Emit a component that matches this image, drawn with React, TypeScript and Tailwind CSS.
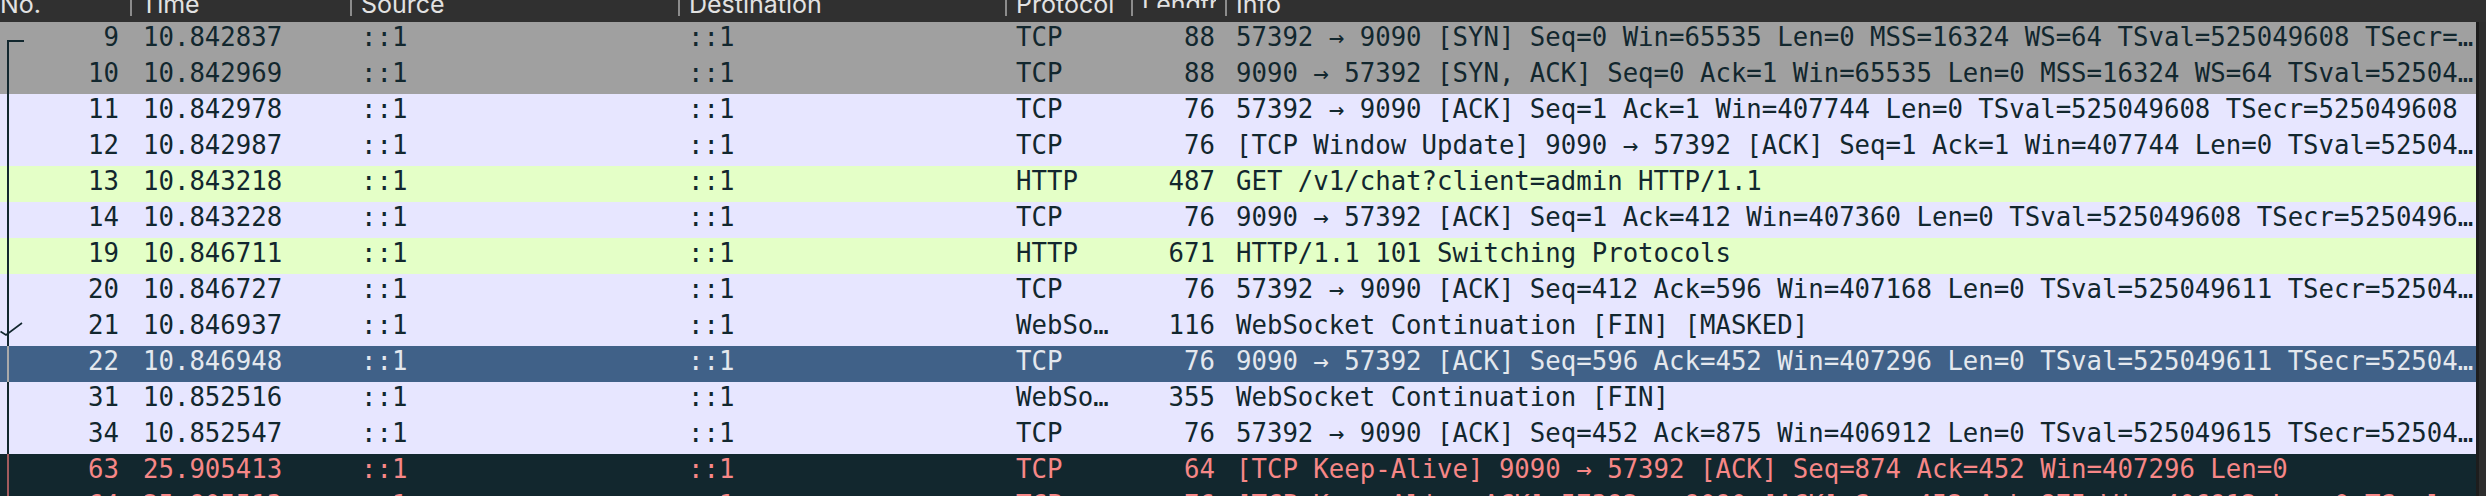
import React from 'react'

type Kind = 'syn' | 'tcp' | 'http' | 'sel' | 'bad'
type Mark = 'start' | 'line' | 'check'

const kinds: Record<Kind, { row: string; stroke: string }> = {
  syn: { row: 'bg-[#a0a0a0] text-[#12272e]', stroke: '#12272e' },
  tcp: { row: 'bg-[#e7e6ff] text-[#12272e]', stroke: '#12272e' },
  http: { row: 'bg-[#e4ffc7] text-[#12272e]', stroke: '#12272e' },
  sel: { row: 'bg-[#406188] text-[#e4e8ee]', stroke: '#a9a9a9' },
  bad: { row: 'bg-[#12272e] text-[#f78787]', stroke: '#a35b5e' },
}

const packets: { no: number; time: string; proto: string; len: number; info: string; kind: Kind; mark: Mark }[] = [
  { no: 9, time: '10.842837', proto: 'TCP', len: 88, kind: 'syn', mark: 'start', info: '57392 → 9090 [SYN] Seq=0 Win=65535 Len=0 MSS=16324 WS=64 TSval=525049608 TSecr=0 SACK_PERM' },
  { no: 10, time: '10.842969', proto: 'TCP', len: 88, kind: 'syn', mark: 'line', info: '9090 → 57392 [SYN, ACK] Seq=0 Ack=1 Win=65535 Len=0 MSS=16324 WS=64 TSval=525049608 TSecr=525049608 SACK_PERM' },
  { no: 11, time: '10.842978', proto: 'TCP', len: 76, kind: 'tcp', mark: 'line', info: '57392 → 9090 [ACK] Seq=1 Ack=1 Win=407744 Len=0 TSval=525049608 TSecr=525049608' },
  { no: 12, time: '10.842987', proto: 'TCP', len: 76, kind: 'tcp', mark: 'line', info: '[TCP Window Update] 9090 → 57392 [ACK] Seq=1 Ack=1 Win=407744 Len=0 TSval=525049608 TSecr=525049608' },
  { no: 13, time: '10.843218', proto: 'HTTP', len: 487, kind: 'http', mark: 'line', info: 'GET /v1/chat?client=admin HTTP/1.1' },
  { no: 14, time: '10.843228', proto: 'TCP', len: 76, kind: 'tcp', mark: 'line', info: '9090 → 57392 [ACK] Seq=1 Ack=412 Win=407360 Len=0 TSval=525049608 TSecr=525049608' },
  { no: 19, time: '10.846711', proto: 'HTTP', len: 671, kind: 'http', mark: 'line', info: 'HTTP/1.1 101 Switching Protocols' },
  { no: 20, time: '10.846727', proto: 'TCP', len: 76, kind: 'tcp', mark: 'line', info: '57392 → 9090 [ACK] Seq=412 Ack=596 Win=407168 Len=0 TSval=525049611 TSecr=525049611' },
  { no: 21, time: '10.846937', proto: 'WebSocket', len: 116, kind: 'tcp', mark: 'check', info: 'WebSocket Continuation [FIN] [MASKED]' },
  { no: 22, time: '10.846948', proto: 'TCP', len: 76, kind: 'sel', mark: 'line', info: '9090 → 57392 [ACK] Seq=596 Ack=452 Win=407296 Len=0 TSval=525049611 TSecr=525049611' },
  { no: 31, time: '10.852516', proto: 'WebSocket', len: 355, kind: 'tcp', mark: 'line', info: 'WebSocket Continuation [FIN]' },
  { no: 34, time: '10.852547', proto: 'TCP', len: 76, kind: 'tcp', mark: 'line', info: '57392 → 9090 [ACK] Seq=452 Ack=875 Win=406912 Len=0 TSval=525049615 TSecr=525049615' },
  { no: 63, time: '25.905413', proto: 'TCP', len: 64, kind: 'bad', mark: 'line', info: '[TCP Keep-Alive] 9090 → 57392 [ACK] Seq=874 Ack=452 Win=407296 Len=0' },
  { no: 64, time: '25.905513', proto: 'TCP', len: 76, kind: 'bad', mark: 'line', info: '[TCP Keep-Alive ACK] 57392 → 9090 [ACK] Seq=452 Ack=875 Win=406912 Len=0 TSval=525064669 TSecr=525049615' },
]

// header labels; Length is clipped by its narrow column, like in the capture
const headers = [
  { label: 'No.', w: 'w-[130px]', first: true, clip: '' },
  { label: 'Time', w: 'w-[220px]', clip: '' },
  { label: 'Source', w: 'w-[328px]', clip: '' },
  { label: 'Destination', w: 'w-[327px]', clip: '' },
  { label: 'Protocol', w: 'w-[126px]', clip: '' },
  { label: 'Length', w: 'w-[94px]', clip: 'max-w-[83px] overflow-hidden' },
  { label: 'Info', w: 'flex-1', clip: '' },
]

function RelLine({ mark, stroke }: { mark: Mark; stroke: string }) {
  return (
    <svg width="26" height="36" viewBox="0 0 26 36" className="shrink-0">
      {mark === 'start' ? (
        <path d="M8 36 V19 H24" fill="none" stroke={stroke} strokeWidth="2" />
      ) : (
        <path d="M8 0 V36" fill="none" stroke={stroke} strokeWidth="2" />
      )}
      {mark === 'check' && (
        <path d="M0.5 21.5 L6 25 L22 13" fill="none" stroke={stroke} strokeWidth="1.6" />
      )}
    </svg>
  )
}

export default function App() {
  return (
    <div className="h-[496px] w-full overflow-hidden bg-[#e7e6ff]">
      <div className="flex h-[22px] overflow-hidden bg-[#303030] text-[#e2e2e2] font-['Inter',sans-serif] text-[25px]">
        {headers.map((h) => (
          <div key={h.label} className={`${h.w} flex shrink-0 items-start overflow-hidden`}>
            {!h.first && <span className="h-[16px] w-[2px] shrink-0 bg-[#8c8c8c]" />}
            <span className={`${h.first ? 'pl-0' : 'pl-[9px]'} ${h.clip} whitespace-nowrap leading-[8px]`}>{h.label}</span>
          </div>
        ))}
      </div>

      <div className="flex">
        <div className="min-w-0 flex-1 font-['DejaVu_Sans_Mono',monospace] text-[25.7px]">
          {packets.map((p) => {
            const k = kinds[p.kind]
            return (
              <div key={p.no} className={`${k.row} flex h-[36px] items-start whitespace-nowrap leading-[30px]`}>
                <div className="flex w-[130px] shrink-0 items-start">
                  <RelLine mark={p.mark} stroke={k.stroke} />
                  <span className="flex-1 pr-[11px] text-right">{p.no}</span>
                </div>
                <div className="w-[220px] shrink-0 pl-[13px]">{p.time}</div>
                <div className="w-[328px] shrink-0 pl-[11px]">::1</div>
                <div className="w-[327px] shrink-0 pl-[10px]">::1</div>
                <div className="w-[126px] shrink-0 overflow-hidden text-ellipsis px-[11px]">{p.proto}</div>
                <div className="w-[94px] shrink-0 pr-[10px] text-right">{p.len}</div>
                <div className="min-w-0 flex-1 overflow-hidden text-ellipsis pl-[11px]">{p.info}</div>
              </div>
            )
          })}
        </div>
        <div className="h-[474px] w-[10px] shrink-0 border-l-[3px] border-[#1d1d1d] bg-[#2e2e2e]" />
      </div>
    </div>
  )
}
